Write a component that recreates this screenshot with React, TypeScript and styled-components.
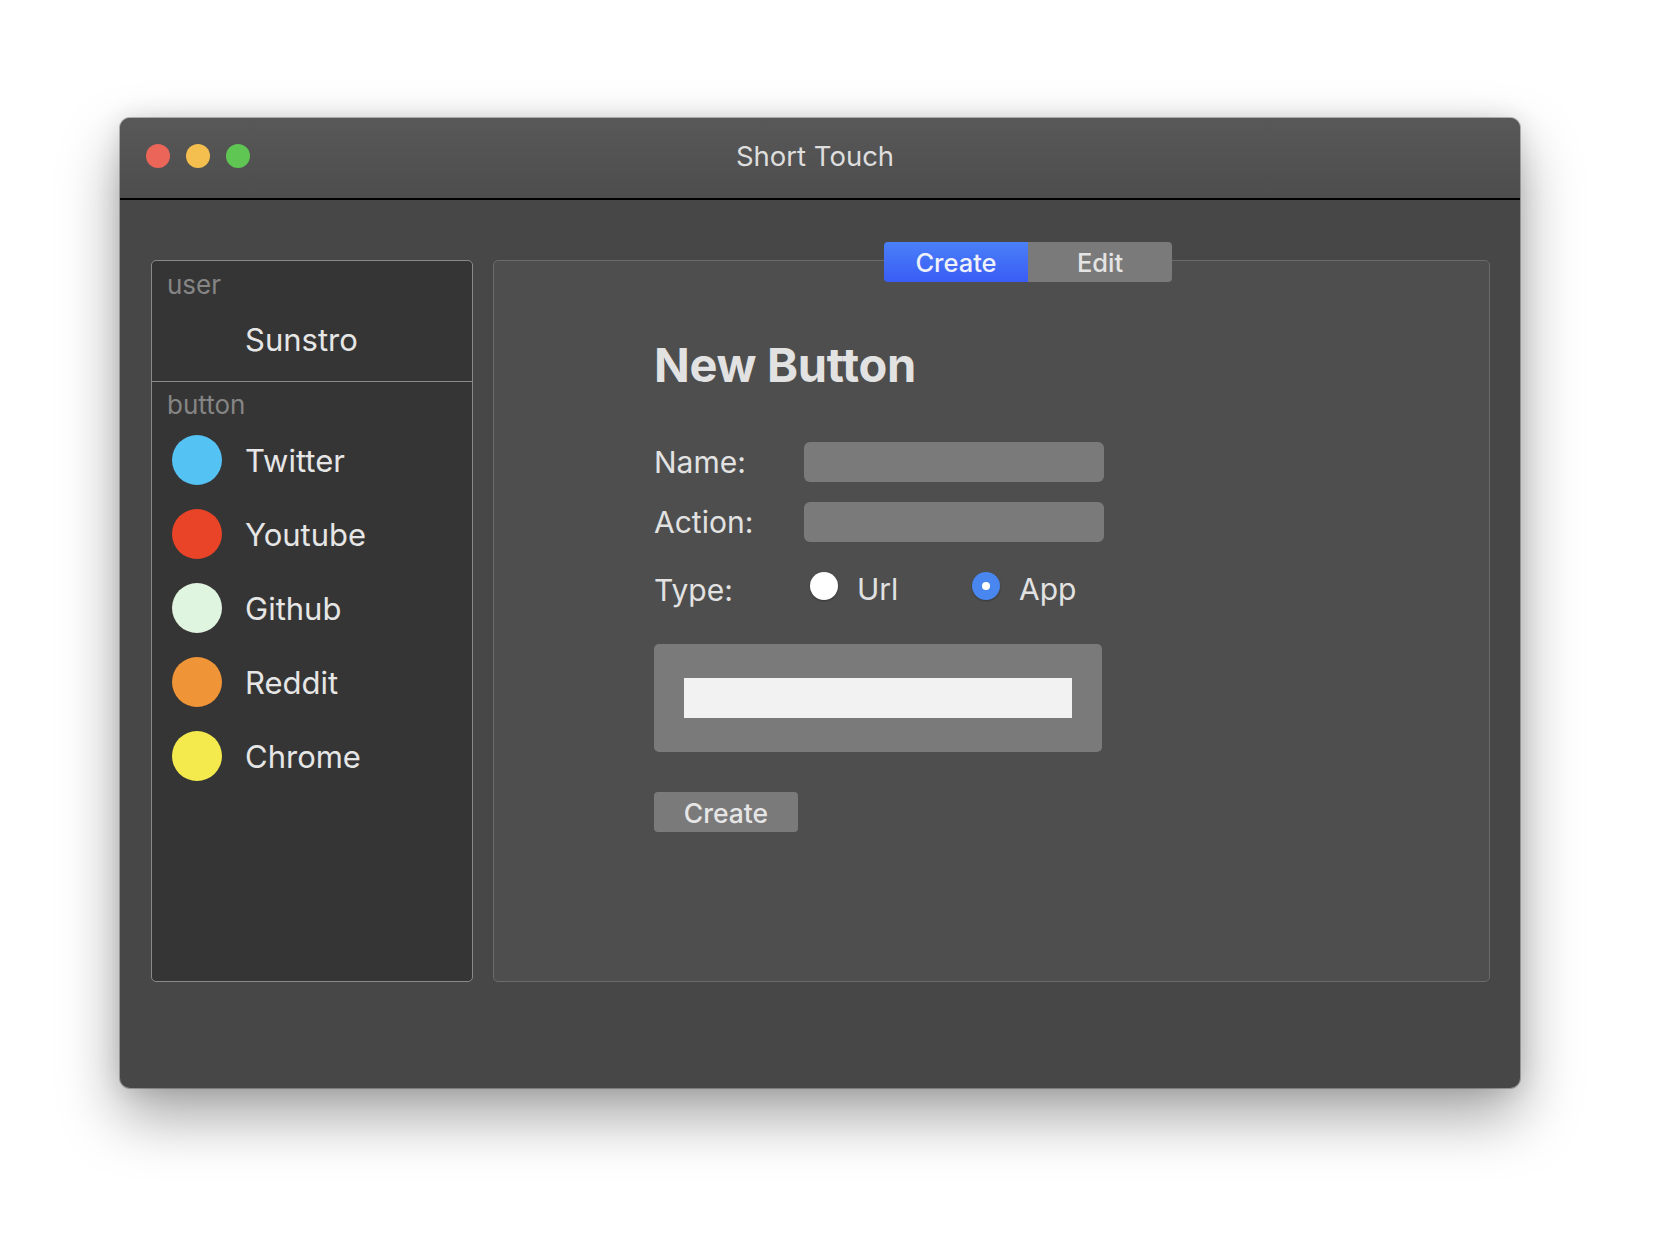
import React from "react";
import styled, { createGlobalStyle } from "styled-components";

const Global = createGlobalStyle`
  html, body { margin: 0; padding: 0; background: #ffffff; }
  body { font-family: Inter, "Noto Sans", "Liberation Sans", sans-serif; }
  * { box-sizing: border-box; }
`;

const Stage = styled.div`
  width: 1660px;
  height: 1248px;
  padding: 118px 0 0 120px;
  background: #ffffff;
`;

const Window = styled.div`
  width: 1400px;
  height: 970px;
  border-radius: 10px;
  overflow: hidden;
  background: #474747;
  display: flex;
  flex-direction: column;
  box-shadow: 0 28px 60px rgba(0, 0, 0, 0.36), 0 0 24px rgba(0, 0, 0, 0.12),
    0 0 0 1px rgba(0, 0, 0, 0.25);
`;

const TitleBar = styled.div`
  height: 82px;
  flex: none;
  border-bottom: 2px solid #000;
  background: linear-gradient(#585858, #4d4d4d);
  display: grid;
  grid-template-columns: 1fr auto 1fr;
  align-items: center;
  padding: 0 26px;
`;

const Lights = styled.div`
  display: flex;
  gap: 16px;
  margin-top: -4px;
`;

const Light = styled.span<{ $c: string }>`
  width: 24px;
  height: 24px;
  border-radius: 50%;
  background: ${(p) => p.$c};
`;

const Title = styled.div`
  font-size: 27.5px;
  color: #dedede;
  padding-right: 10px;
  margin-top: -4px;
`;

const Body = styled.div`
  flex: 1;
  display: flex;
  gap: 20px;
  padding: 60px 30px 106px 31px;
`;

const Sidebar = styled.div`
  width: 322px;
  flex: none;
  background: #353535;
  border: 1px solid #8a8a8a;
  border-radius: 5px;
  display: flex;
  flex-direction: column;
`;

const UserSection = styled.div`
  height: 121px;
  border-bottom: 1px solid #8a8a8a;
  padding: 8px 0 0 15px;
  display: flex;
  flex-direction: column;
`;

const SectionLabel = styled.div`
  font-size: 26px;
  line-height: 32px;
  color: #858585;
`;

const UserName = styled.div`
  font-size: 31px;
  line-height: 36px;
  color: #e6e6e6;
  margin: 21px 0 0 78px;
`;

const ButtonSection = styled.div`
  padding: 7px 0 0 15px;
  display: flex;
  flex-direction: column;
`;

const ItemList = styled.div`
  display: flex;
  flex-direction: column;
  gap: 24px;
  margin-top: 14px;
  padding-left: 5px;
`;

const Item = styled.div`
  display: flex;
  align-items: center;
  gap: 23px;
  height: 50px;
  font-size: 31px;
  color: #e6e6e6;
`;

const Dot = styled.span<{ $c: string }>`
  width: 50px;
  height: 50px;
  border-radius: 50%;
  background: ${(p) => p.$c};
  flex: none;
`;

const Panel = styled.div`
  flex: 1;
  background: #4e4e4e;
  border: 1px solid #6b6b6b;
  border-radius: 5px;
  display: flex;
  flex-direction: column;
`;

const TabBar = styled.div`
  display: flex;
  margin: -19px 0 0 390px;
  height: 40px;
`;

const Tab = styled.div<{ $active?: boolean }>`
  width: 144px;
  height: 40px;
  display: flex;
  align-items: center;
  justify-content: center;
  font-size: 25.5px;
  font-weight: 500;
  color: ${(p) => (p.$active ? "#eef0fa" : "#e4e4e4")};
  background: ${(p) =>
    p.$active ? "linear-gradient(#4a80f8, #3a5cf5)" : "#7a7a7a"};
  &:first-child { border-radius: 4px 0 0 4px; }
  &:last-child { border-radius: 0 4px 4px 0; }
`;

const Form = styled.div`
  padding-left: 160px;
  display: flex;
  flex-direction: column;
`;

const Heading = styled.h1`
  margin: 55px 0 0;
  font-size: 47px;
  line-height: 56px;
  font-weight: 700;
  letter-spacing: -0.3px;
  color: #e2e2e2;
`;

const Rows = styled.div`
  margin-top: 49px;
  display: grid;
  grid-template-columns: 150px 300px;
  grid-template-rows: 40px 40px 48px;
  row-gap: 20px;
  align-items: center;
`;

const Label = styled.div<{ $shift?: number }>`
  font-size: 30px;
  color: #e2e2e2;
  margin-top: ${(p) => p.$shift ?? 0}px;
`;

const Field = styled.div`
  height: 40px;
  border-radius: 6px;
  background: #7a7a7a;
`;

const RadioGroup = styled.div`
  display: flex;
  align-items: center;
  padding-left: 6px;
  width: 400px;
`;

const Option = styled.div`
  width: 162px;
  display: flex;
  align-items: center;
  gap: 19px;
`;

const OptionText = styled.span`
  font-size: 30px;
  color: #e2e2e2;
  margin-top: 6px;
`;

const Radio = styled.span<{ $on?: boolean }>`
  width: 28px;
  height: 28px;
  border-radius: 50%;
  flex: none;
  display: flex;
  align-items: center;
  justify-content: center;
  background: ${(p) => (p.$on ? "#4a86f0" : "#ffffff")};
  box-shadow: 0 1px 2px rgba(0, 0, 0, 0.3);
  &::after {
    content: "";
    width: 8px;
    height: 8px;
    border-radius: 50%;
    background: #ffffff;
    display: ${(p) => (p.$on ? "block" : "none")};
  }
`;

const Box = styled.div`
  margin-top: 34px;
  width: 448px;
  height: 108px;
  border-radius: 5px;
  background: #7a7a7a;
  padding: 34px 30px 0;
`;

const WhiteField = styled.div`
  height: 40px;
  background: #f2f2f2;
`;

const CreateButton = styled.div`
  margin-top: 40px;
  width: 144px;
  height: 40px;
  border-radius: 4px;
  background: #7a7a7a;
  display: flex;
  align-items: center;
  justify-content: center;
  padding-top: 2px;
  font-size: 26.5px;
  font-weight: 500;
  color: #e6e6e6;
`;

const items = [
  { name: "Twitter", color: "#55c2f4" },
  { name: "Youtube", color: "#e94427" },
  { name: "Github", color: "#e0f5df" },
  { name: "Reddit", color: "#f09537" },
  { name: "Chrome", color: "#f4e94d" },
];

export default function App() {
  return (
    <>
      <Global />
      <Stage>
        <Window>
          <TitleBar>
            <Lights>
              <Light $c="#ec6559" />
              <Light $c="#f5bf4f" />
              <Light $c="#5fc553" />
            </Lights>
            <Title>Short Touch</Title>
            <div />
          </TitleBar>
          <Body>
            <Sidebar>
              <UserSection>
                <SectionLabel>user</SectionLabel>
                <UserName>Sunstro</UserName>
              </UserSection>
              <ButtonSection>
                <SectionLabel>button</SectionLabel>
                <ItemList>
                  {items.map((it) => (
                    <Item key={it.name}>
                      <Dot $c={it.color} />
                      {it.name}
                    </Item>
                  ))}
                </ItemList>
              </ButtonSection>
            </Sidebar>
            <Panel>
              <TabBar>
                <Tab $active>Create</Tab>
                <Tab>Edit</Tab>
              </TabBar>
              <Form>
                <Heading>New Button</Heading>
                <Rows>
                  <Label>Name:</Label>
                  <Field />
                  <Label>Action:</Label>
                  <Field />
                  <Label $shift={8}>Type:</Label>
                  <RadioGroup>
                    <Option>
                      <Radio />
                      <OptionText>Url</OptionText>
                    </Option>
                    <Option>
                      <Radio $on />
                      <OptionText>App</OptionText>
                    </Option>
                  </RadioGroup>
                </Rows>
                <Box>
                  <WhiteField />
                </Box>
                <CreateButton>Create</CreateButton>
              </Form>
            </Panel>
          </Body>
        </Window>
      </Stage>
    </>
  );
}
